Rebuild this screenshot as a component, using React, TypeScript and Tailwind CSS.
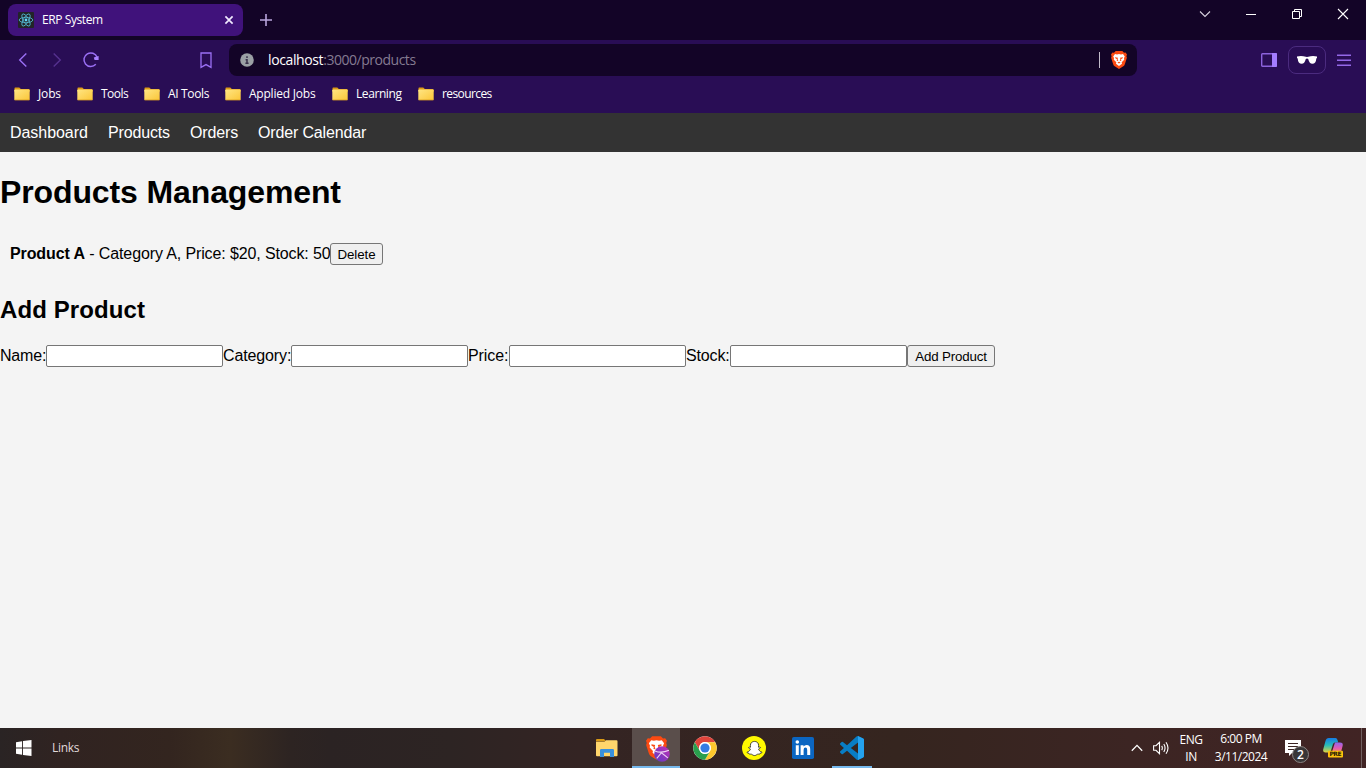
import type { ReactNode } from "react";
import { FaSnapchatGhost } from "react-icons/fa";

const ui = "font-['Open_Sans','Noto_Sans',sans-serif]";

function FolderIcon() {
  return (
    <svg width="16" height="14" viewBox="0 0 16 14" className="shrink-0">
      <defs>
        <linearGradient id="folder" x1="0" y1="0" x2="1" y2="1">
          <stop offset="0" stopColor="#ffe583" />
          <stop offset="1" stopColor="#fbc638" />
        </linearGradient>
      </defs>
      <path d="M0.5 1.2Q0.5.5 1.2.5H5.3L6.8 2H14.8Q15.5 2 15.5 2.8V5H.5z" fill="#dc9a16" />
      <rect x=".3" y="2.5" width="15.4" height="10.6" rx=".7" fill="url(#folder)" />
      <path d="M.6 13H15.4" stroke="#d79c20" strokeWidth=".8" />
    </svg>
  );
}

function ReactIcon() {
  return (
    <svg width="16" height="16" viewBox="0 0 16 16">
      <rect width="16" height="16" rx="1" fill="#222428" />
      <g fill="none" stroke="#53b8d2" strokeWidth=".85">
        <ellipse cx="8" cy="8" rx="6.8" ry="2.7" />
        <ellipse cx="8" cy="8" rx="6.8" ry="2.7" transform="rotate(60 8 8)" />
        <ellipse cx="8" cy="8" rx="6.8" ry="2.7" transform="rotate(120 8 8)" />
      </g>
      <circle cx="8" cy="8" r="1.4" fill="#61dafb" />
    </svg>
  );
}

function BraveShield({ className }: { className: string }) {
  return (
    <svg viewBox="0 0 16 18" className={className}>
      <path d="M4.7 0H11.3L13 1.7 14.6 1.5 16 3.5 15.4 5.2 15.9 6.7 13.8 13.2Q13.4 14.5 12.3 15.3L8 18 3.7 15.3Q2.6 14.5 2.2 13.2L.1 6.7.6 5.2 0 3.5 1.4 1.5 3 1.7Z" fill="#fb4a12" />
      <path d="M4 3.1 6 3.4 8 3 10 3.4 12 3.1 13.8 5.4 13 7.1 13.2 8.7 10.7 11.2 11 12.7 8 15 5 12.7 5.3 11.2 2.8 8.7 3 7.1 2.2 5.4Z" fill="#fff" />
      <path d="M4.2 6.2 7 6.7 6.6 8 7.3 10.2 5.6 9.5 6 8.2 4.1 7Z M11.8 6.2 9 6.7 9.4 8 8.7 10.2 10.4 9.5 10 8.2 11.9 7Z M6.4 11.5 8 10.7 9.6 11.5 8 12.6Z" fill="#fb4a12" />
    </svg>
  );
}

function TaskButton({ children, className = "" }: { children: ReactNode; className?: string }) {
  return <div className={`flex h-10 items-center justify-center ${className}`}>{children}</div>;
}

const bookmarks = [
  { name: "Jobs", box: "w-[63px]", text: "tracking-[-0.15px]" },
  { name: "Tools", box: "w-[67px]", text: "tracking-[-0.5px]" },
  { name: "AI Tools", box: "w-[81px]", text: "tracking-[-0.35px]" },
  { name: "Applied Jobs", box: "w-[107px]", text: "tracking-[-0.22px]" },
  { name: "Learning", box: "w-[86px]", text: "tracking-[-0.42px]" },
  { name: "resources", box: "w-[90px]", text: "tracking-[-0.6px]" },
];

function BrowserChrome() {
  return (
    <header className={`h-[113px] shrink-0 bg-[#290d55] text-white ${ui}`}>
      <div className="flex h-10 bg-[#130427]">
        <div className="mt-1 ml-2 flex h-8 w-[235px] items-center rounded-lg bg-[#40127b] pl-2.5">
          <ReactIcon />
          <span className="ml-2 text-[12px] tracking-[-0.42px]">ERP System</span>
          <svg width="10" height="10" viewBox="0 0 10 10" className="mr-[9px] ml-auto" stroke="#f1eaff" strokeWidth="1.7">
            <path d="M1.4 1.4 8.6 8.6M8.6 1.4 1.4 8.6" />
          </svg>
        </div>
        <svg width="12" height="12" viewBox="0 0 12 12" className="mt-3.5 ml-[17px]" stroke="#b9a5dd" strokeWidth="1.6">
          <path d="M6 0V12M0 6H12" />
        </svg>
        <div className="ml-auto flex h-7 items-center">
          <svg width="12" height="12" viewBox="0 0 12 12" fill="none" stroke="#d8d2df" strokeWidth="1.1" className="mr-[35px]">
            <path d="M1 3.5 6 8.5 11 3.5" />
          </svg>
          <span className="mr-[35px] h-px w-2.5 bg-white" />
          <svg width="12" height="12" viewBox="0 0 12 12" fill="none" stroke="#fff" strokeWidth="1" className="mr-[34px]">
            <path d="M1.5 3.5H8.5V10.5H1.5ZM3.5 3.5V1.5H10.5V8.5H8.5" />
          </svg>
          <svg width="12" height="12" viewBox="0 0 12 12" fill="none" stroke="#fff" strokeWidth="1.1" className="mr-[17px]">
            <path d="M1 1 11 11M11 1 1 11" />
          </svg>
        </div>
      </div>

      <div className="flex h-10 items-center">
        <svg width="10" height="16" viewBox="0 0 10 16" fill="none" stroke="#9b70f5" strokeWidth="1.4" className="ml-[18px]">
          <path d="M8.3 1.4 1.7 8 8.3 14.6" />
        </svg>
        <svg width="10" height="16" viewBox="0 0 10 16" fill="none" stroke="#56318f" strokeWidth="1.4" className="ml-6">
          <path d="M1.7 1.4 8.3 8 1.7 14.6" />
        </svg>
        <svg width="18" height="18" viewBox="0 0 18 18" fill="none" stroke="#9b70f5" strokeWidth="1.5" className="ml-5">
          <path d="M13.8 13.3A6.8 6.8 0 1 1 15.1 6.2" />
          <path d="M11.8 6.6 16.6 5V9H12.6Z" fill="#a980ff" stroke="none" />
        </svg>
        <svg width="12" height="17" viewBox="0 0 12 17" fill="none" stroke="#9b70f5" strokeWidth="1.3" className="ml-[100px]">
          <path d="M1 1H11V15.4L6 12.6 1 15.4Z" />
        </svg>
        <div className="ml-[17px] flex h-8 w-[908px] items-center rounded-lg bg-[#130427] pl-[11px]">
          <svg width="14" height="14" viewBox="0 0 14 14">
            <circle cx="7" cy="7" r="6.8" fill="#9ba0a5" />
            <path d="M7 3.2V5M5.6 6.7H7V10.3M5.4 10.3H8.6" stroke="#39304a" strokeWidth="1.5" fill="none" />
          </svg>
          <span className="mb-px ml-3.5 text-[14px] tracking-[-0.48px] text-[#857b92]">
            <span className="tracking-[-0.38px] text-white">localhost</span>:3000/products
          </span>
          <span className="mr-[11px] ml-auto h-4 w-px bg-[#c1bbc9]" />
          <BraveShield className="mr-2.5 h-[18px] w-4" />
        </div>
        <svg width="16" height="14" viewBox="0 0 16 14" className="ml-auto">
          <rect x=".7" y=".7" width="14.6" height="12.6" rx=".7" fill="none" stroke="#8c62dc" strokeWidth="1.4" />
          <path d="M11 0H15Q16 0 16 1V13Q16 14 15 14H11Z" fill="#a47cff" />
        </svg>
        <div className="ml-[11px] flex h-7 w-[38px] items-center justify-center rounded-lg border border-[#4b2b7f]">
          <svg width="20" height="9" viewBox="0 0 20 9" fill="#fff">
            <path d="M0 .5Q4.5-.5 8.8.8Q10 1 11.2.8Q15.5-.5 20 .5V2L19.3 2.4Q19 7.8 15.3 7.8Q12.5 7.8 11.2 2.9Q10 1.9 8.8 2.9Q7.5 7.8 4.7 7.8Q1 7.8.7 2.4L0 2Z" />
          </svg>
        </div>
        <svg width="14" height="12" viewBox="0 0 14 12" className="mr-[15px] ml-[11px]" stroke="#9468e8" strokeWidth="1.4">
          <path d="M0 1.3H14M0 6.3H14M0 11.2H14" />
        </svg>
      </div>

      <nav className="flex h-7 items-center pl-3.5 text-[12px]">
        {bookmarks.map((b) => (
          <div key={b.name} className={`flex shrink-0 items-center whitespace-nowrap ${b.box}`}>
            <FolderIcon />
            <span className={`ml-2 ${b.text}`}>{b.name}</span>
          </div>
        ))}
      </nav>
    </header>
  );
}

const fields = [
  { label: "Name:", width: "w-[46px]", text: "tracking-[-0.2px]" },
  { label: "Category:", width: "w-[68px]", text: "tracking-[-0.12px]" },
  { label: "Price:", width: "w-[41px]", text: "tracking-[-0.1px]" },
  { label: "Stock:", width: "w-[44px]", text: "tracking-[-0.15px]" },
];

const button =
  "h-[22px] shrink-0 rounded-[3px] border border-[#767676] bg-[#efefef] pt-px text-[13.333px] leading-[19px] whitespace-nowrap";

function ProductsPage() {
  return (
    <div className="flex-1 bg-[#f4f4f4] font-['Liberation_Sans',Arial,sans-serif] text-[16px] leading-[18px] text-black">
      <nav className="flex h-[39px] items-center bg-[#333] text-white">
        <a className="ml-2.5 w-[98px] tracking-[-0.05px]">Dashboard</a>
        <a className="w-[82px] tracking-[-0.15px]">Products</a>
        <a className="w-[68px] tracking-[-0.15px]">Orders</a>
        <a className="tracking-[-0.15px]">Order Calendar</a>
      </nav>
      <main>
        <h1 className="mt-[22px] text-[32px] leading-[37px] font-bold tracking-[-0.12px]">Products Management</h1>
        <ul className="mt-8">
          <li className="flex h-[22px] items-center pl-2.5">
            <span className="w-80 tracking-[-0.12px] whitespace-nowrap">
              <strong className="tracking-[-0.1px]">Product A</strong>
              <span> - Category A, Price: $20, Stock: 50</span>
            </span>
            <button className={`${button} w-[53px] tracking-[-0.1px]`}>Delete</button>
          </li>
        </ul>
        <h2 className="mt-[31px] text-[24px] leading-7 font-bold tracking-[0.1px]">Add Product</h2>
        <form className="mt-[21px] flex h-[22px] items-center">
          {fields.map((f) => (
            <label key={f.label} className="flex items-center">
              <span className={`whitespace-nowrap ${f.width} ${f.text}`}>{f.label}</span>
              <input className="h-[22px] w-[177px] rounded-[2px] border border-[#767676] bg-white px-1 text-[13.333px]" />
            </label>
          ))}
          <button type="button" className={`${button} w-[88px] tracking-[-0.15px]`}>Add Product</button>
        </form>
      </main>
    </div>
  );
}

function Taskbar() {
  return (
    <footer
      className={`flex h-10 shrink-0 items-center bg-[linear-gradient(90deg,#2a2424_0px,#302321_60px,#33251f_170px,#3b2d21_230px,#2d2422_290px,#2b2323_330px,#2d2423_450px,#342423_580px,#35251f_900px,#3c2523_1130px,#412424_1366px)] text-[12px] text-white ${ui}`}
    >
      <svg width="16" height="16" viewBox="0 0 16 16" fill="#fff" className="ml-4">
        <path d="M0 2.2 6.1 1.3V7.5H0ZM7 1.1 15.5 0V7.5H7ZM0 8.4H6.1V14.7L0 13.8ZM7 8.4H15.5V16L7 14.9Z" />
      </svg>
      <span className="ml-5 w-[530px] tracking-[-0.3px] text-[#e0dada]">Links</span>
      <TaskButton className="w-[50px]">
        <svg width="22" height="18" viewBox="0 0 22 18">
          <path d="M0 1Q0 0 1 0H8L10.3 2.4H0Z" fill="#d99a16" />
          <path d="M0 2.7H8.5L10 1.2H20.5Q21.5 1.2 21.5 2.2V16.4Q21.5 17.2 20.5 17.2H1Q0 17.2 0 16.2Z" fill="#ffd66c" />
          <path d="M4 18V11.2Q4 10 5.2 10H16.8Q18 10 18 11.2V18H14V13.8H8V18Z" fill="#3990dc" />
        </svg>
      </TaskButton>
      <TaskButton className="w-12 border-b-2 border-[#76b9ed] bg-[#5a4e4b]">
        <div className="relative mt-[3px] ml-1 h-[26px] w-6">
          <BraveShield className="h-6 w-[21px]" />
          <svg width="16" height="16" viewBox="0 0 15 15" className="absolute right-0 bottom-0">
            <defs>
              <linearGradient id="private" x1="1" y1="0" x2="0" y2="1">
                <stop stopColor="#c52fb4" />
                <stop offset="1" stopColor="#5a3cc4" />
              </linearGradient>
            </defs>
            <circle cx="7.5" cy="7.5" r="7.3" fill="url(#private)" />
            <path d="M.8 4.6Q7 7.2 14 4M2.6 11.6 7 6.3 13 11.2" stroke="#efd4f3" fill="none" strokeWidth="1" />
          </svg>
        </div>
      </TaskButton>
      <TaskButton className="w-[50px]">
        <svg width="24" height="24" viewBox="0 0 48 48">
          <circle cx="24" cy="24" r="23.5" fill="#fff" />
          <path d="M3.65 12.25A23.5 23.5 0 0 1 44.35 12.25H24A11.75 11.75 0 0 0 13.8 29.9Z" fill="#df443b" />
          <path d="M44.35 12.25A23.5 23.5 0 0 1 24 47.5L34.2 29.9A11.75 11.75 0 0 0 24 12.25Z" fill="#fdc72d" />
          <path d="M24 47.5A23.5 23.5 0 0 1 3.65 12.25L13.8 29.9A11.75 11.75 0 0 0 34.2 29.9Z" fill="#299f4d" />
          <circle cx="24" cy="24" r="11.8" fill="#fff" />
          <circle cx="24" cy="24" r="9.2" fill="#347be2" />
        </svg>
      </TaskButton>
      <TaskButton className="w-12">
        <span className="flex h-6 w-6 items-center justify-center rounded-full bg-[#fff900]">
          <FaSnapchatGhost size={15} color="#fff" stroke="#222" strokeWidth="28" className="overflow-visible" />
        </span>
      </TaskButton>
      <TaskButton className="w-[50px]">
        <svg width="22" height="22" viewBox="0 0 22 22">
          <rect width="22" height="22" rx="1.8" fill="#0b66c2" />
          <circle cx="5.3" cy="5" r="1.8" fill="#fff" />
          <path d="M3.8 8.2H6.8V18H3.8ZM8.6 8.2H11.5V9.6Q12.5 8 14.6 8 18.2 8 18.2 12.2V18H15.2V12.9Q15.2 10.5 13.5 10.5 11.6 10.5 11.6 12.9V18H8.6Z" fill="#fff" />
        </svg>
      </TaskButton>
      <TaskButton className="ml-1 w-10 border-b-2 border-[#76b9ed]">
        <svg width="24" height="24" viewBox="0 0 24 24" className="mt-0.5">
          <path d="M23.15 2.587L18.21.21a1.494 1.494 0 0 0-1.705.29l-9.46 8.63-4.12-3.128a.999.999 0 0 0-1.276.057L.327 7.261A1 1 0 0 0 .326 8.74L3.899 12 .326 15.26a1 1 0 0 0 .001 1.479L1.65 17.94a.999.999 0 0 0 1.276.057l4.12-3.128 9.46 8.63a1.492 1.492 0 0 0 1.704.29l4.942-2.377A1.5 1.5 0 0 0 24 20.06V3.939a1.5 1.5 0 0 0-.85-1.352zm-5.146 14.861L10.826 12l7.178-5.448v10.896z" fill="#087dc4" />
          <path d="M18 0 23.15 2.587Q24 3 24 3.939V20.06Q24 21 23.15 21.4L18 24Z" fill="#24a2ee" />
        </svg>
      </TaskButton>

      <svg width="12" height="8" viewBox="0 0 12 8" fill="none" stroke="#fff" strokeWidth="1.3" className="ml-auto">
        <path d="M.8 6.8 6 1.4 11.2 6.8" />
      </svg>
      <svg width="17" height="14" viewBox="0 0 17 14" fill="none" stroke="#fff" strokeWidth="1.1" className="ml-2.5">
        <path d="M.6 4.7H3L6.5 1.3V12.7L3 9.3H.6ZM8.7 4.9Q10 7 8.7 9.1" />
        <path d="M10.8 3Q13.3 7 10.8 11M13 1.2Q17 7 13 12.8" />
      </svg>
      <div className="ml-[9px] flex w-6 flex-col items-center leading-[17px] tracking-[-0.4px] whitespace-nowrap">
        <span>ENG</span>
        <span>IN</span>
      </div>
      <div className="ml-[11px] flex w-[54px] flex-col items-center leading-[18px] tracking-[-0.5px] whitespace-nowrap">
        <span>6:00 PM</span>
        <span>3/11/2024</span>
      </div>
      <div className="relative ml-[17px] h-6 w-6">
        <svg width="16" height="16" viewBox="0 0 16 16" className="mt-1">
          <path d="M0 0H16V13H7L4 16V13H0Z" fill="#fff" />
          <path d="M3 3.5H13M3 6.5H13M3 9.5H10" stroke="#3d2725" />
        </svg>
        <span className="absolute top-[10px] left-[7px] flex h-[17px] w-[17px] items-center justify-center rounded-full border border-[#8b8583] bg-[#393637] text-[12px] font-semibold">2</span>
      </div>
      <svg width="20" height="20" viewBox="0 0 20 20" className="mr-[18px] ml-3.5">
        <defs>
          <linearGradient id="copilotLeft" x1="0" y1="0" x2="0" y2="1">
            <stop stopColor="#157de6" />
            <stop offset=".5" stopColor="#28bdb8" />
            <stop offset="1" stopColor="#e4d43e" />
          </linearGradient>
          <linearGradient id="copilotRight" x1="0" y1="0" x2="0" y2="1">
            <stop stopColor="#9065ee" />
            <stop offset=".6" stopColor="#e45bb1" />
            <stop offset="1" stopColor="#f48c62" />
          </linearGradient>
        </defs>
        <path d="M5.8 0H12.5Q14 0 14.5 2L15.2 4.4H12Q10.5 4.4 10 6L8 12.5Q7.5 14.5 5.5 14.5H2.5Q-.6 14.5.3 11L2.5 3Q3.2 0 5.8 0Z" fill="url(#copilotLeft)" />
        <path d="M12 4.4H17Q20.5 4.4 19.6 8L18 14H9L11.5 6Q12 4.4 12 4.4Z" fill="url(#copilotRight)" />
        <rect x="5" y="12.8" width="15" height="6.6" rx="1" fill="#ffc20c" />
        <text x="12.5" y="18.2" textAnchor="middle" fontSize="6" fontWeight="700" fill="#241703" fontFamily="DejaVu Sans" textLength="12">PRE</text>
      </svg>
      <span className="mr-1 h-10 w-px bg-[#716060]" />
    </footer>
  );
}

export default function App() {
  return (
    <div className="flex h-screen w-full flex-col overflow-hidden">
      <BrowserChrome />
      <ProductsPage />
      <Taskbar />
    </div>
  );
}
